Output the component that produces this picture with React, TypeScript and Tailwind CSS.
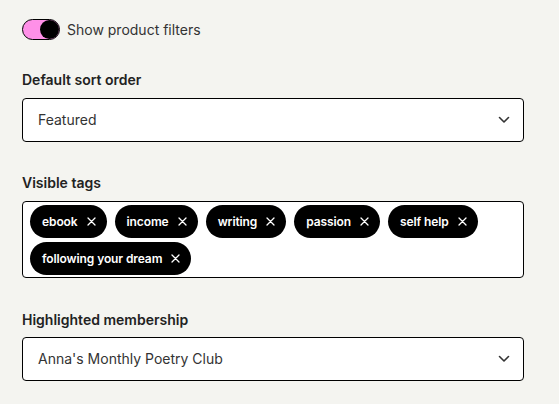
import React from "react";

const font = { fontFamily: "Inter, 'Noto Sans', sans-serif" };

function Chevron() {
  return (
    <svg width="12" height="8" viewBox="0 0 12 8" fill="none" className="shrink-0">
      <path d="M1.5 1.5 L6 6 L10.5 1.5" stroke="#333" strokeWidth="1.6" strokeLinecap="round" strokeLinejoin="round" />
    </svg>
  );
}

function XIcon() {
  return (
    <svg width="9" height="9" viewBox="0 0 9 9" fill="none" className="shrink-0">
      <path d="M1 1 L8 8 M8 1 L1 8" stroke="white" strokeWidth="1.3" strokeLinecap="round" />
    </svg>
  );
}

function Tag({ label }: { label: string }) {
  return (
    <div className="flex h-[33px] items-center gap-[9px] rounded-full bg-black pl-3 pr-[11px] text-[12px] leading-4 font-semibold tracking-[-0.1px] text-white">
      <span>{label}</span>
      <XIcon />
    </div>
  );
}

function Select({ value }: { value: string }) {
  return (
    <div className="flex h-[44px] items-center justify-between rounded-[4px] border border-black bg-white pl-[15px] pr-[13px] text-[14px] leading-5 text-[#333]">
      <span>{value}</span>
      <Chevron />
    </div>
  );
}

export default function App() {
  const tags = ["ebook", "income", "writing", "passion", "self help", "following your dream"];
  return (
    <div className="min-h-[404px] w-full bg-[#f4f4f0] pt-[19px]" style={font}>
      <div className="ml-[22px] w-[502px]">
        <div className="flex h-[21px] items-center gap-[7px]">
          <div className="flex h-[21px] w-[38px] items-center justify-end rounded-full border border-black bg-[#ff90e8]">
            <div className="h-[19px] w-[19px] rounded-full bg-black" />
          </div>
          <span className="text-[14px] leading-5 text-[#333]">Show product filters</span>
        </div>

        <div className="mt-[30px] text-[14px] leading-5 font-semibold text-[#222]">Default sort order</div>
        <div className="mt-[8px]">
          <Select value="Featured" />
        </div>

        <div className="mt-[31px] text-[14px] leading-5 font-semibold text-[#222]">Visible tags</div>
        <div className="mt-[8px] flex flex-wrap gap-x-[8px] gap-y-[4px] rounded-[4px] border border-black bg-white px-[7px] pt-[3px] pb-[2px]">
          {tags.map((t) => (
            <Tag key={t} label={t} />
          ))}
        </div>

        <div className="mt-[32px] text-[14px] leading-5 font-semibold text-[#222]">Highlighted membership</div>
        <div className="mt-[7px]">
          <Select value="Anna's Monthly Poetry Club" />
        </div>
      </div>
    </div>
  );
}
